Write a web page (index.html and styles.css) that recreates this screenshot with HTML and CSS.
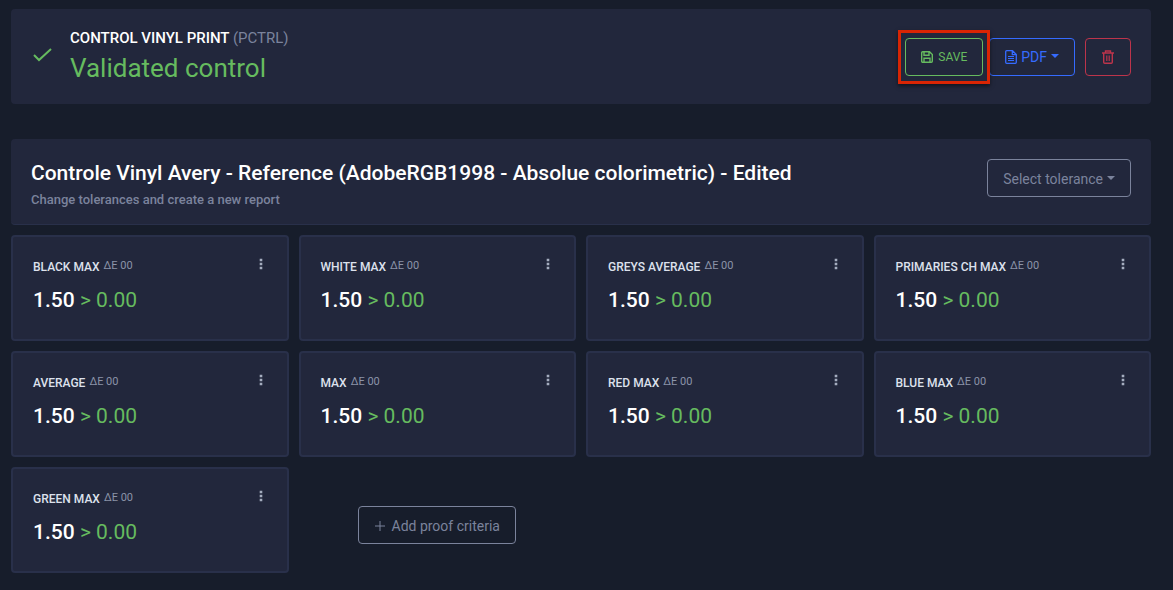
FILE: index.html
```html
<!DOCTYPE html>
<html lang="en">
<head>
<meta charset="utf-8">
<meta name="viewport" content="width=device-width, initial-scale=1">
<title>Control vinyl print</title>
<link rel="stylesheet" href="styles.css">
</head>
<body>
<svg class="sprite" aria-hidden="true">
  <symbol id="dots" viewBox="0 0 4 12"><path d="M.7 .7h2.600v2.600H.7zM.7 4.700h2.600v2.600H.7zM.7 8.700h2.600v2.600H.7z"/></symbol>
</svg>
<main class="page">
  <header class="panel status">
    <svg class="status-check" viewBox="0 0 20 14" aria-hidden="true"><path d="M1 7l5 5L18 1"/></svg>
    <div class="status-text">
      <p class="status-name">CONTROL VINYL PRINT <span class="muted">(PCTRL)</span></p>
      <h1 class="status-title">Validated control</h1>
    </div>
    <div class="actions">
      <div class="highlight">
        <button class="btn btn-save" type="button">
          <svg class="icon-save" viewBox="0 0 12 12" aria-hidden="true"><path d="M1.700 .7H8.500L11.300 3.500V10.300a1 1 0 0 1-1 1H1.700a1 1 0 0 1-1-1V1.700a1 1 0 0 1 1-1zM3 .7V4.300H8V.7M3 11.300V7.300H9V11.300"/></svg>
          SAVE
        </button>
      </div>
      <button class="btn btn-pdf" type="button">
        <svg class="icon-file" viewBox="0 0 12 14" aria-hidden="true"><path d="M1.700 .7H7.500L11.300 4.500V12.300a1 1 0 0 1-1 1H1.700a1 1 0 0 1-1-1V1.700a1 1 0 0 1 1-1zM7.300 .7V4.700H11.300"/><path class="fine" d="M3 6.500H9M3 8.500H9M3 10.500H9"/></svg>
        PDF
        <span class="caret"></span>
      </button>
      <button class="btn btn-delete" type="button" aria-label="Delete">
        <svg class="icon-trash" viewBox="0 0 12 14" aria-hidden="true"><path d="M0 3H12M3.500 3V1H8.500V3M1.700 3V12.300a1 1 0 0 0 1 1H9.300a1 1 0 0 0 1-1V3"/><path class="fine" d="M4.500 5.500V11M6 5.500V11M7.500 5.500V11"/></svg>
      </button>
    </div>
  </header>

  <section class="panel report">
    <div class="report-text">
      <h2 class="report-title">Controle Vinyl Avery - Reference (AdobeRGB1998 - Absolue colorimetric) - Edited</h2>
      <p class="report-note">Change tolerances and create a new report</p>
    </div>
    <button class="btn btn-muted" type="button">Select tolerance <span class="caret"></span></button>
  </section>

  <section class="grid">
    <article class="card">
      <div class="card-head"><h3 class="card-name">BLACK MAX</h3><span class="unit">ΔE 00</span><button class="menu" type="button" aria-label="Black max options"><svg class="dots"><use href="#dots"/></svg></button></div>
      <p class="value">1.50 <span class="good">&gt; 0.00</span></p>
    </article>
    <article class="card">
      <div class="card-head"><h3 class="card-name">WHITE MAX</h3><span class="unit">ΔE 00</span><button class="menu" type="button" aria-label="White max options"><svg class="dots"><use href="#dots"/></svg></button></div>
      <p class="value">1.50 <span class="good">&gt; 0.00</span></p>
    </article>
    <article class="card">
      <div class="card-head"><h3 class="card-name">GREYS AVERAGE</h3><span class="unit">ΔE 00</span><button class="menu" type="button" aria-label="Greys average options"><svg class="dots"><use href="#dots"/></svg></button></div>
      <p class="value">1.50 <span class="good">&gt; 0.00</span></p>
    </article>
    <article class="card">
      <div class="card-head"><h3 class="card-name">PRIMARIES CH MAX</h3><span class="unit">ΔE 00</span><button class="menu" type="button" aria-label="Primaries CH max options"><svg class="dots"><use href="#dots"/></svg></button></div>
      <p class="value">1.50 <span class="good">&gt; 0.00</span></p>
    </article>
    <article class="card">
      <div class="card-head"><h3 class="card-name">AVERAGE</h3><span class="unit">ΔE 00</span><button class="menu" type="button" aria-label="Average options"><svg class="dots"><use href="#dots"/></svg></button></div>
      <p class="value">1.50 <span class="good">&gt; 0.00</span></p>
    </article>
    <article class="card">
      <div class="card-head"><h3 class="card-name">MAX</h3><span class="unit">ΔE 00</span><button class="menu" type="button" aria-label="Max options"><svg class="dots"><use href="#dots"/></svg></button></div>
      <p class="value">1.50 <span class="good">&gt; 0.00</span></p>
    </article>
    <article class="card">
      <div class="card-head"><h3 class="card-name">RED MAX</h3><span class="unit">ΔE 00</span><button class="menu" type="button" aria-label="Red max options"><svg class="dots"><use href="#dots"/></svg></button></div>
      <p class="value">1.50 <span class="good">&gt; 0.00</span></p>
    </article>
    <article class="card">
      <div class="card-head"><h3 class="card-name">BLUE MAX</h3><span class="unit">ΔE 00</span><button class="menu" type="button" aria-label="Blue max options"><svg class="dots"><use href="#dots"/></svg></button></div>
      <p class="value">1.50 <span class="good">&gt; 0.00</span></p>
    </article>
    <article class="card">
      <div class="card-head"><h3 class="card-name">GREEN MAX</h3><span class="unit">ΔE 00</span><button class="menu" type="button" aria-label="Green max options"><svg class="dots"><use href="#dots"/></svg></button></div>
      <p class="value">1.50 <span class="good">&gt; 0.00</span></p>
    </article>
    <div class="add">
      <button class="btn btn-muted btn-add" type="button"><svg class="icon-plus" viewBox="0 0 12 12" aria-hidden="true"><path d="M6 1V11M1 6H11"/></svg>Add proof criteria</button>
    </div>
  </section>
</main>
</body>
</html>
```

FILE: styles.css
```css
* { box-sizing: border-box; }

body {
  margin: 0;
  background: #171d2b;
  color: #fff;
  font-family: Roboto, "Liberation Sans", sans-serif;
  font-size: 14px;
}

h1, h2, h3, p { margin: 0; }

.sprite { display: none; }

.page { padding: 9px 22px 9px 11px; }

.panel {
  display: flex;
  background: #22273c;
  border-radius: 4px;
}

.muted { color: #7b839c; font-weight: 400; }

.status {
  align-items: center;
  padding: 17px 20px 17px 22px;
}

.status-check {
  width: 20px;
  height: 14px;
  margin: 0 17px 4px 0;
  fill: none;
  stroke: #66bb5f;
  stroke-width: 2;
}

.status-name {
  font-size: 15px;
  line-height: 24px;
  font-weight: 500;
}

.status-title {
  font-size: 26px;
  line-height: 37px;
  font-weight: 400;
  color: #66bb5f;
}

.actions {
  display: flex;
  align-items: center;
  margin-left: auto;
}

.btn {
  display: flex;
  align-items: center;
  justify-content: center;
  height: 38px;
  padding: 1px 15px 0;
  border: 1px solid;
  border-radius: 4px;
  background: transparent;
  font: inherit;
  white-space: nowrap;
}

.btn svg { fill: none; stroke: currentColor; }
.btn .fine { stroke-width: 1; }

.highlight {
  z-index: 1;
  padding: 5px 4px;
  border: 3px solid #d92504;
  background: #22273c;
  box-shadow: 0 2px 4px rgb(0 0 0 / 50%);
}

.btn-save { color: #66bb5f; font-size: 12px; gap: 5px; }
.icon-save { width: 12px; height: 12px; stroke-width: 1.400; }

.btn-pdf { margin-left: -1px; color: #356bff; gap: 4px; }
.icon-file { width: 12px; height: 14px; stroke-width: 1.300; }

.btn-delete { width: 46px; margin-left: 10px; color: #bd344b; }
.icon-trash { width: 12px; height: 14px; stroke-width: 1.400; }
.btn .icon-trash .fine { stroke-width: .8; }

.caret {
  border: 4px solid transparent;
  border-top-color: currentColor;
  border-bottom: 0;
  margin-bottom: 2px;
}

.report {
  justify-content: space-between;
  margin: 35px 0 10px;
  padding: 20px 20px 14px;
  border-bottom: 1px solid #29304a;
}

.report-title {
  font-size: 21px;
  line-height: 28px;
  font-weight: 500;
}

.report-note {
  margin-top: 3px;
  font-size: 13px;
  line-height: 20px;
  font-weight: 500;
  color: #7b839c;
}

.btn-muted { gap: 4px; color: #7b839c; }

.grid {
  display: grid;
  grid-template-columns: repeat(4, 1fr);
  gap: 10px;
}

.card {
  padding: 19px 20px 24px;
  border: 2px solid #29304a;
  border-radius: 4px;
  background: #22273c;
}

.card-head {
  display: flex;
  align-items: center;
  gap: 4px;
  height: 20px;
}

.card-name {
  padding-top: 1px;
  font-size: 12px;
  line-height: 18px;
  font-weight: 500;
  color: #dde1ec;
}

.unit { font-size: 11px; line-height: 20px; color: #8b93a8; }

.menu {
  margin-left: auto;
  padding: 0 4px 4px;
  border: 0;
  background: transparent;
  color: #a5adbf;
}

.dots { display: block; width: 4px; height: 12px; fill: currentColor; }

.value {
  margin-top: 9px;
  font-size: 21px;
  line-height: 30px;
  font-weight: 500;
}

.good { color: #66bb5f; font-weight: 400; }

.add { padding: 39px 0 0 59px; }
.btn-add { gap: 6px; }
.icon-plus { width: 12px; height: 12px; }
```
